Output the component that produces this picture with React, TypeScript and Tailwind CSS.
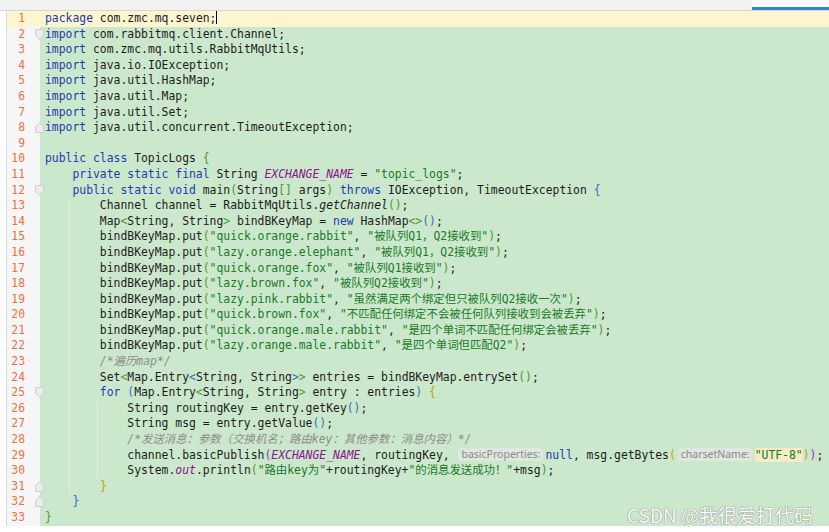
import React from "react"

type Tok = [string, string]

const cls: Record<string, string> = {
  k: "text-[#1b3caf]",
  t: "text-[#1c1c1c]",
  s: "text-[#167a27]",
  f: "text-[#87138f] italic",
  c: "text-[#8c8c8c] italic",
  m: "text-[#1c1c1c] italic",
  y: "text-[#b9a400]",
  g: "text-[#4c9a2a]",
  b: "text-[#3b6bbf]",
  p: "text-[#8a3fb0]",
  u: "text-[#167a27] bg-[#f3ecc4]",
}

const put = (a: string, b: string): Tok[] => [
  ["        bindBKeyMap.put", "t"],
  ["(", "g"],
  [`"${a}"`, "s"],
  [", ", "t"],
  [`"${b}"`, "s"],
  [")", "g"],
  [";", "t"],
]

const imp = (p: string): Tok[] => [
  ["import", "k"],
  [` ${p};`, "t"],
]

const lines: Tok[][] = [
  [["package", "k"], [" com.zmc.mq.seven;", "t"]],
  imp("com.rabbitmq.client.Channel"),
  imp("com.zmc.mq.utils.RabbitMqUtils"),
  imp("java.io.IOException"),
  imp("java.util.HashMap"),
  imp("java.util.Map"),
  imp("java.util.Set"),
  imp("java.util.concurrent.TimeoutException"),
  [],
  [["public class", "k"], [" TopicLogs ", "t"], ["{", "g"]],
  [["    private static final", "k"], [" String ", "t"], ["EXCHANGE_NAME", "f"], [" = ", "t"], ['"topic_logs"', "s"], [";", "t"]],
  [["    public static void", "k"], [" main", "t"], ["(", "g"], ["String", "t"], ["[]", "g"], [" args", "t"], [")", "g"], [" throws", "k"], [" IOException, TimeoutException ", "t"], ["{", "b"]],
  [["        Channel channel = RabbitMqUtils.", "t"], ["getChannel", "m"], ["()", "g"], [";", "t"]],
  [["        Map", "t"], ["<", "g"], ["String, String", "t"], [">", "g"], [" bindBKeyMap = ", "t"], ["new", "k"], [" HashMap", "t"], ["<>", "g"], ["()", "b"], [";", "t"]],
  put("quick.orange.rabbit", "被队列Q1，Q2接收到"),
  put("lazy.orange.elephant", "被队列Q1，Q2接收到"),
  put("quick.orange.fox", "被队列Q1接收到"),
  put("lazy.brown.fox", "被队列Q2接收到"),
  put("lazy.pink.rabbit", "虽然满足两个绑定但只被队列Q2接收一次"),
  put("quick.brown.fox", "不匹配任何绑定不会被任何队列接收到会被丢弃"),
  put("quick.orange.male.rabbit", "是四个单词不匹配任何绑定会被丢弃"),
  put("lazy.orange.male.rabbit", "是四个单词但匹配Q2"),
  [["        /*遍历map*/", "c"]],
  [["        Set", "t"], ["<", "g"], ["Map.Entry", "t"], ["<", "b"], ["String, String", "t"], [">", "b"], [">", "g"], [" entries = bindBKeyMap.entrySet", "t"], ["()", "g"], [";", "t"]],
  [["        for", "k"], [" ", "t"], ["(", "b"], ["Map.Entry", "t"], ["<", "g"], ["String, String", "t"], [">", "g"], [" entry : entries", "t"], [")", "b"], [" ", "t"], ["{", "y"]],
  [["            String routingKey = entry.getKey", "t"], ["()", "b"], [";", "t"]],
  [["            String msg = entry.getValue", "t"], ["()", "b"], [";", "t"]],
  [["            /*发送消息：参数（交换机名；路由key：其他参数：消息内容）*/", "c"]],
  [["            channel.basicPublish", "t"], ["(", "p"], ["EXCHANGE_NAME", "f"], [", routingKey, ", "t"], ["basicProperties:", "h"], ["null", "k"], [", msg.getBytes", "t"], ["(", "y"], ["charsetName:", "h"], ['"UTF-8"', "u"], [")", "y"], [")", "p"], [";", "t"]],
  [["            System.", "t"], ["out", "f"], [".println", "t"], ["(", "g"], ['"路由key为"', "s"], ["+routingKey+", "t"], ['"的消息发送成功！"', "s"], ["+msg", "t"], [")", "g"], [";", "t"]],
  [["        ", "t"], ["}", "y"]],
  [["    ", "t"], ["}", "b"]],
  [["}", "g"]],
]

const foldDown = new Set([2, 12, 25])
const foldUp = new Set([8, 31, 32])

function Fold({ up }: { up: boolean }) {
  return (
    <svg width="9" height="11" viewBox="0 0 9 11" className="absolute left-[28px] top-[2px]">
      {up ? (
        <path d="M0.5 10.5 V4.5 L4.5 0.8 L8.5 4.5 V10.5 Z" fill="#ececec" stroke="#cfcfcf" />
      ) : (
        <path d="M0.5 0.5 H8.5 V6.5 L4.5 10.2 L0.5 6.5 Z" fill="#ececec" stroke="#cfcfcf" />
      )}
    </svg>
  )
}

function Hint({ text }: { text: string }) {
  return (
    <span className="inline-block mx-[2px] px-[3px] rounded-[4px] bg-[#dfe8df] text-[#8a8a8a] not-italic text-[10.5px] leading-[13px] align-[1px] [font-family:'Noto_Sans',sans-serif]">
      {text}
    </span>
  )
}

export default function App() {
  return (
    <div className="relative w-[829px] h-[532px] bg-white overflow-hidden">
      <div className="flex h-[11px] border-b border-[#d6d6d6]">
        <div className="w-[752px] bg-[#f2f2f2]" />
        <div className="flex-1 bg-white flex flex-col justify-end">
          <div className="h-[3px] bg-[#3d7fcf]" />
        </div>
      </div>

      <div className="ml-[6px] border-l border-[#dcdcdc] [font-family:'DejaVu_Sans_Mono','Noto_Sans_CJK_SC',monospace] text-[11.4px] leading-[15.6px]">
        {lines.map((toks, i) => {
          const n = i + 1
          const cur = n === 1
          return (
            <div key={n} className={`relative flex h-[15.6px] ${cur ? "bg-[#fdf4d0]" : ""}`}>
              <div className={`w-[33px] shrink-0 pr-[15px] text-right text-[#f0703e] ${cur ? "" : "bg-[#f6f6f6]"}`}>
                {n}
              </div>
              <div className={`relative flex-1 pl-[5px] whitespace-pre ${cur ? "" : "bg-[#cce8cc]"}`}>
                {n >= 13 && n <= 31 && <div className="absolute left-[29px] top-0 bottom-0 w-px bg-[#e3eee3]" />}
                {n >= 26 && n <= 30 && <div className="absolute left-[57px] top-0 bottom-0 w-px bg-[#e3eee3]" />}
                {toks.map(([s, k], j) =>
                  k === "h" ? <Hint key={j} text={s} /> : <span key={j} className={cls[k]}>{s}</span>
                )}
                {cur && <span className="inline-block w-px h-[13px] bg-black align-[-2px]" />}
              </div>
              {foldDown.has(n) && <Fold up={false} />}
              {foldUp.has(n) && <Fold up />}
            </div>
          )
        })}
      </div>

      <div className="absolute right-[16px] bottom-[5px] text-[19px] leading-[24px] text-white [font-family:'Noto_Sans_CJK_SC',sans-serif] [text-shadow:0_0_1px_#7a7a7a,0_0_1px_#7a7a7a]">
        CSDN @我很爱打代码
      </div>
    </div>
  )
}
